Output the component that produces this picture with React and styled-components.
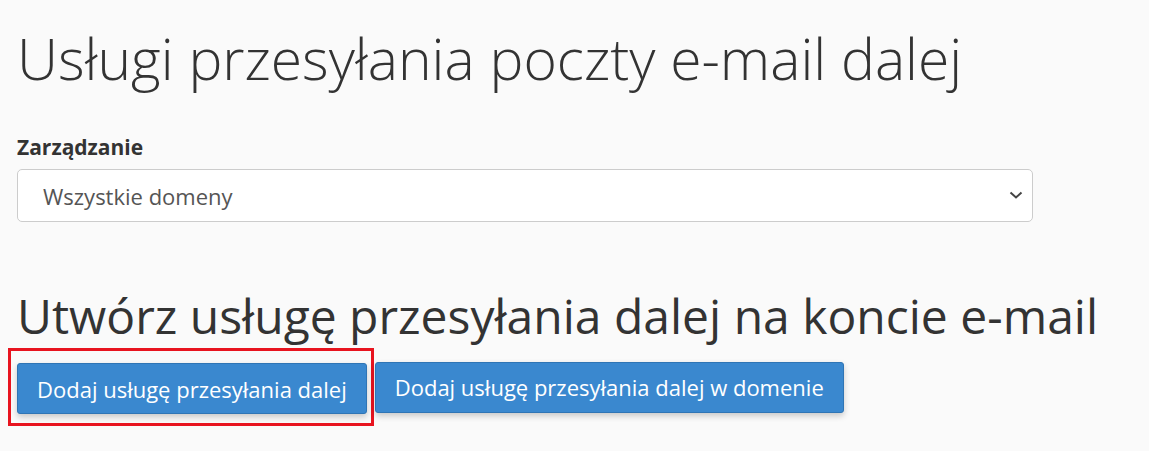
import styled, { createGlobalStyle } from 'styled-components';

const GlobalStyle = createGlobalStyle`
  html, body {
    margin: 0;
    padding: 0;
    background: #fafafa;
    font-family: "Open Sans", "Liberation Sans", sans-serif;
    color: #333;
  }
`;

export default function App() {
  return (
    <>
      <GlobalStyle />
      <Page>
        <Title>Usługi przesyłania poczty e-mail dalej</Title>
        <Field>
          <Label htmlFor="domain">Zarządzanie</Label>
          <SelectWrap>
            <Select id="domain" defaultValue="all">
              <option value="all">Wszystkie domeny</option>
            </Select>
            <Chevron viewBox="0 0 16 16" aria-hidden="true">
              <path d="M2.5 5.5 8 10.5l5.5-5" />
            </Chevron>
          </SelectWrap>
        </Field>
        <Subtitle>Utwórz usługę przesyłania dalej na koncie e-mail</Subtitle>
        <Actions>
          <Highlight>
            <Button>Dodaj usługę przesyłania dalej</Button>
          </Highlight>
          <Button>Dodaj usługę przesyłania dalej w domenie</Button>
        </Actions>
      </Page>
    </>
  );
}

const Page = styled.main`
  padding: 20px 17px 0 17px;
`;

const Title = styled.h1`
  margin: 0;
  font-size: 57px;
  font-weight: 300;
  line-height: 76px;
  color: #333;
`;

const Field = styled.div`
  margin-top: 37px;
  width: 1016px;
`;

const Label = styled.label`
  display: block;
  font-size: 21px;
  font-weight: 700;
  line-height: 28px;
  color: #333;
  margin-bottom: 8px;
`;

const SelectWrap = styled.div`
  position: relative;
`;

const Select = styled.select`
  appearance: none;
  width: 100%;
  height: 53px;
  box-sizing: border-box;
  background: #fff;
  border: 1px solid #ccc;
  border-radius: 5px;
  padding: 0 40px 0 25px;
  font-family: inherit;
  font-size: 22px;
  color: #555;
`;

const Chevron = styled.svg`
  position: absolute;
  right: 9px;
  top: 50%;
  width: 16px;
  height: 16px;
  margin-top: -9px;
  fill: none;
  stroke: #444;
  stroke-width: 2;
  pointer-events: none;
`;

const Subtitle = styled.h2`
  margin: 64px 0 0;
  font-size: 48px;
  font-weight: 500;
  line-height: 60px;
  color: #333;
`;

const Actions = styled.div`
  display: flex;
  align-items: center;
  gap: 1px;
  margin-top: 2px;
`;

const Highlight = styled.div`
  margin-left: -9px;
  padding: 12px 4px 9px 6px;
  border: 3px solid #e8141f;
`;

const Button = styled.button`
  display: block;
  height: 51px;
  padding: 0 19px;
  background: #3a88cf;
  border: 1px solid #2f75b5;
  border-radius: 3px;
  box-shadow: 0 3px 6px rgba(0, 0, 0, 0.2);
  color: #fff;
  font-family: inherit;
  font-size: 22px;
  font-weight: 400;
  white-space: nowrap;
  cursor: pointer;
`;
